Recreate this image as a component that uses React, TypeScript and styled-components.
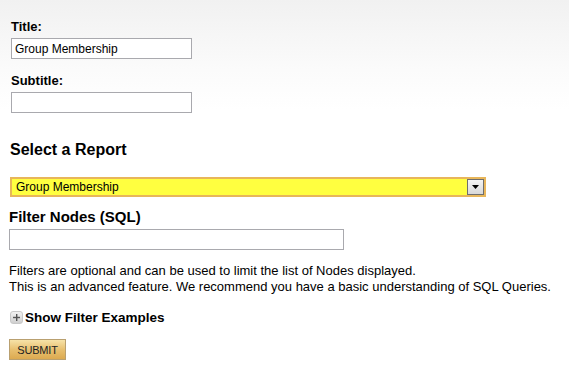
import React from "react";
import styled, { createGlobalStyle } from "styled-components";

const Global = createGlobalStyle`
  html, body { margin: 0; padding: 0; }
  body {
    background: #ffffff;
    font-family: "Liberation Sans", Arial, sans-serif;
    color: #000;
  }
`;

const Page = styled.div`
  width: 569px;
  height: 372px;
  box-sizing: border-box;
  background: linear-gradient(to bottom, #f1f1f1 0px, #fbfbfb 70px, #ffffff 110px, #ffffff 100%);
  padding-top: 19px;
  display: flex;
  flex-direction: column;
`;

const Section = styled.div<{ $left: number }>`
  padding-left: ${(p) => p.$left}px;
  display: flex;
  flex-direction: column;
  align-items: flex-start;
`;

const Field = styled.div<{ $mt?: number }>`
  display: flex;
  flex-direction: column;
  align-items: flex-start;
  gap: 4px;
  margin-top: ${(p) => p.$mt ?? 0}px;
`;

const Label = styled.label<{ $big?: boolean }>`
  font-size: ${(p) => (p.$big ? 15 : 13)}px;
  font-weight: bold;
  line-height: ${(p) => (p.$big ? 17 : 15)}px;
  color: #000;
`;

const TextInput = styled.input<{ $w: number }>`
  box-sizing: border-box;
  width: ${(p) => p.$w}px;
  height: 21px;
  border: 1px solid #a9a9ae;
  background: #fff;
  padding: 0 3px;
  margin: 0;
  font-family: "Liberation Sans", Arial, sans-serif;
  font-size: 12px;
  color: #000;
  outline: none;
`;

const Heading = styled.h2`
  margin: 28px 0 0 0;
  font-size: 16px;
  line-height: 18px;
  font-weight: bold;
`;

const SelectBox = styled.div`
  margin-top: 18px;
  box-sizing: border-box;
  width: 476px;
  height: 20px;
  border: 2px solid #e8b65a;
  background: #ffff40;
  display: flex;
  align-items: center;
  justify-content: space-between;
`;

const SelectText = styled.span`
  font-size: 12px;
  padding-left: 4px;
  color: #000;
`;

const ArrowButton = styled.span`
  box-sizing: border-box;
  width: 17px;
  height: 16px;
  border: 1px solid #6e6e6e;
  background: linear-gradient(to bottom, #f4f4f4, #d8d8d8);
  display: flex;
  align-items: center;
  justify-content: center;
`;

const Para = styled.p`
  margin: 13px 0 0 0;
  font-size: 13px;
  line-height: 16px;
`;

const Toggle = styled.div`
  margin-top: 15px;
  display: flex;
  align-items: center;
  gap: 2px;
  font-size: 13.5px;
  font-weight: bold;
  line-height: 15px;
  margin-left: 1px;
`;

const PlusIcon = styled.span`
  box-sizing: border-box;
  width: 13px;
  height: 13px;
  border-radius: 3px;
  border: 1px solid #c8c8c8;
  background: linear-gradient(to bottom, #f2f2f2, #cfcfcf);
  display: flex;
  align-items: center;
  justify-content: center;
`;

const SubmitButton = styled.button`
  margin-top: 14px;
  box-sizing: border-box;
  width: 57px;
  height: 21px;
  padding: 0;
  border: 1px solid #b9a070;
  background: linear-gradient(to bottom, #f6e2a8 0%, #e8c070 50%, #dcaa50 100%);
  font-family: "Liberation Sans", Arial, sans-serif;
  font-size: 11px;
  color: #222;
  letter-spacing: -0.2px;
`;

export default function App() {
  return (
    <>
      <Global />
      <Page>
        <Section $left={11}>
          <Field>
            <Label>Title:</Label>
            <TextInput $w={181} defaultValue="Group Membership" />
          </Field>
          <Field $mt={14}>
            <Label>Subtitle:</Label>
            <TextInput $w={181} defaultValue="" />
          </Field>
        </Section>
        <Section $left={10}>
          <Heading>Select a Report</Heading>
          <SelectBox>
            <SelectText>Group Membership</SelectText>
            <ArrowButton>
              <svg width="7" height="4" viewBox="0 0 7 4">
                <polygon points="0,0 7,0 3.5,4" fill="#000" />
              </svg>
            </ArrowButton>
          </SelectBox>
        </Section>
        <Section $left={9}>
          <Field $mt={11}>
            <Label $big>Filter Nodes (SQL)</Label>
            <TextInput $w={335} defaultValue="" />
          </Field>
          <Para>
            Filters are optional and can be used to limit the list of Nodes displayed.
            <br />
            This is an advanced feature. We recommend you have a basic understanding of SQL Queries.
          </Para>
          <Toggle>
            <PlusIcon>
              <svg width="7" height="7" viewBox="0 0 7 7">
                <rect x="3" y="0" width="1.4" height="7" fill="#555" />
                <rect x="0" y="2.8" width="7" height="1.4" fill="#555" />
              </svg>
            </PlusIcon>
            Show Filter Examples
          </Toggle>
          <SubmitButton>SUBMIT</SubmitButton>
        </Section>
      </Page>
    </>
  );
}
